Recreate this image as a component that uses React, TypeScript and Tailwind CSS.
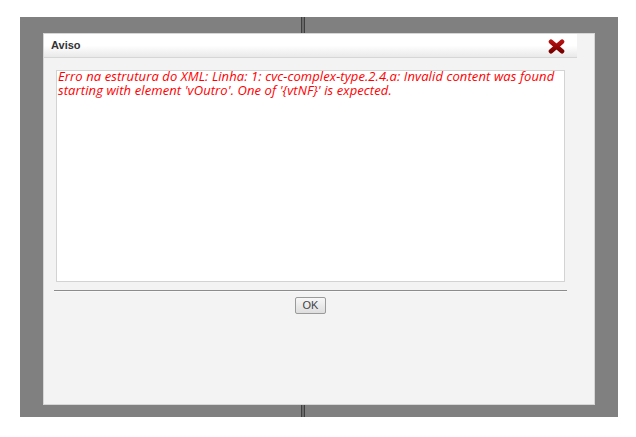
export default function App() {
  return (
    <div className="w-[636px] h-[437px] bg-white pt-[17px] pl-[20px]">
      <div className="relative w-[598px] h-[400px] bg-[#808080] pt-[16px] pl-[23px]">
        {/* frame divider behind the overlay */}
        <div className="absolute top-0 bottom-0 left-[281px] w-[4px] border-x border-[#3f3f3f] bg-[#6a6a6a]" />
        <div className="relative w-[552px] h-[372px] bg-[#f3f3f3] border border-[#d6d6d6] flex flex-col">
          <div className="mr-[17px] h-[24px] flex items-center justify-between pl-[7px] pr-[12px] border-b border-[#d6d6d6] bg-gradient-to-b from-white from-50% to-[#e9e9e9]">
            <span className="text-[11px] font-bold text-[#333] font-['Liberation_Sans',Arial,sans-serif]">Aviso</span>
            <svg width="17" height="15" viewBox="0 0 17 15" className="mt-[1px]">
              <defs>
                <linearGradient id="xg" x1="0" y1="0" x2="0" y2="1">
                  <stop offset="0" stopColor="#b31010" />
                  <stop offset="1" stopColor="#7a0000" />
                </linearGradient>
              </defs>
              <g stroke="url(#xg)" strokeWidth="4.6" strokeLinecap="round">
                <line x1="3" y1="2.8" x2="14" y2="12.2" />
                <line x1="14" y1="2.8" x2="3" y2="12.2" />
              </g>
            </svg>
          </div>
          <div className="ml-[12px] mt-[12px] w-[509px] h-[212px] bg-white border border-[#d3d3d3] px-[1px]">
            <p className="-mt-[2px] text-[13px] leading-[14px] tracking-[0.1px] italic text-[#ff0000] font-['Open_Sans',sans-serif]">
              Erro na estrutura do XML: Linha: 1: cvc-complex-type.2.4.a: Invalid content was found starting with
              element 'vOutro'. One of '{'{vtNF}'}' is expected.
            </p>
          </div>
          <div className="ml-[10px] mt-[8px] w-[513px] flex flex-col items-center">
            <div className="w-full h-[2px] border-t border-[#8c8c8c] border-b border-b-[#f9f9f9]" />
            <button className="mt-[5px] w-[31px] h-[17px] rounded-[2px] border border-[#9a9a9a] bg-gradient-to-b from-[#f7f7f7] to-[#dedede] text-[11px] leading-none text-[#444] font-['Liberation_Sans',Arial,sans-serif]">
              OK
            </button>
          </div>
        </div>
      </div>
    </div>
  );
}
